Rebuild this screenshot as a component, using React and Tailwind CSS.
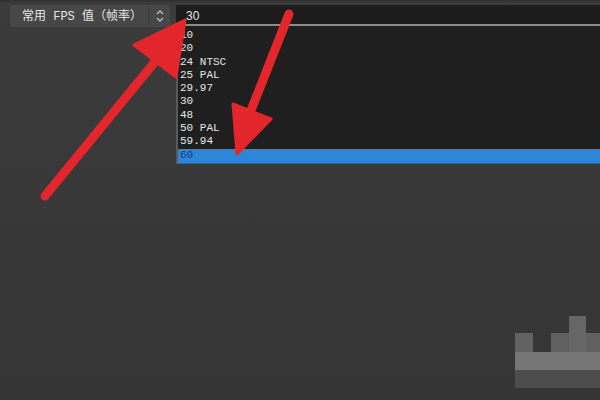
import React from 'react';

const fps = ['10', '20', '24 NTSC', '25 PAL', '29.97', '30', '48', '50 PAL', '59.94', '60'];

const Spinner = () => (
  <svg width="10" height="14" viewBox="0 0 10 14" fill="none" stroke="#bdbdbd" strokeWidth="1.3">
    <path d="M2 5 L5 2 L8 5" />
    <path d="M2 9 L5 12 L8 9" />
  </svg>
);

const Overlay = () => (
  <svg className="absolute inset-0 pointer-events-none" width="600" height="400" viewBox="0 0 600 400">
    {/* pixelated watermark */}
    <rect x="515" y="333" width="18" height="37" fill="#626262" />
    <rect x="551" y="333" width="49" height="19" fill="#606060" />
    <rect x="569" y="316" width="17" height="36" fill="#666666" />
    <rect x="515" y="352" width="85" height="18" fill="#767676" />
    <rect x="515" y="370" width="85" height="18" fill="#4d4d4d" />
    {/* arrows */}
    <g fill="#e3262b" stroke="#e3262b" strokeLinejoin="round">
      <line x1="45" y1="196" x2="158" y2="58" strokeWidth="9" strokeLinecap="round" />
      <polygon points="185,20 134,45 176,77" strokeWidth="3" />
      <line x1="289" y1="14" x2="248" y2="118" strokeWidth="9" strokeLinecap="round" />
      <polygon points="237,154 233,104 271,119" strokeWidth="3" />
    </g>
  </svg>
);

export default function App() {
  return (
    <div className="relative w-[600px] h-[400px] overflow-hidden bg-gradient-to-b from-[#3b3b3b] to-[#353535]">
      <div className="h-[2px] bg-[#323232]" />
      <div className="flex items-start pl-[10px] pt-[3px] gap-[6px]">
        <div className="flex items-center h-[22px] w-[160px] rounded-[3px] bg-[#474747]">
          <span
            className="pl-[12px] pt-[1px] w-[138px] text-[12px] text-[#e6e6e6] whitespace-nowrap leading-none"
            style={{ fontFamily: '"Liberation Mono", "Noto Sans CJK SC", monospace' }}
          >
            常用 FPS 值（帧率）
          </span>
          <div className="w-px h-[18px] bg-[#3a3a3a]" />
          <div className="flex-1 flex justify-center">
            <Spinner />
          </div>
        </div>
        <div className="flex-1 flex flex-col">
          <div className="h-[21px] bg-[#1c1c1c] border-b-2 border-[#8c8c8c] flex items-center pl-[10px] pt-[2px]">
            <span className="text-[12px] text-[#e0e0e0]" style={{ fontFamily: '"Liberation Sans", sans-serif' }}>30</span>
          </div>
          <div
            className="bg-[#1f1f1f] border-l-2 border-[#5a5a5a] border-b border-[#2a2a2a] pt-[3px] text-[11px] leading-[13.3px] text-[#e6e6e6]"
            style={{ fontFamily: '"Liberation Mono", monospace' }}
          >
            {fps.map((f) => (
              <div
                key={f}
                className={f === '60' ? 'pl-[2px] bg-[#2f86d8] text-[#103e7a] h-[14px]' : 'pl-[2px]'}
              >
                {f}
              </div>
            ))}
          </div>
        </div>
      </div>
      <Overlay />
    </div>
  );
}
